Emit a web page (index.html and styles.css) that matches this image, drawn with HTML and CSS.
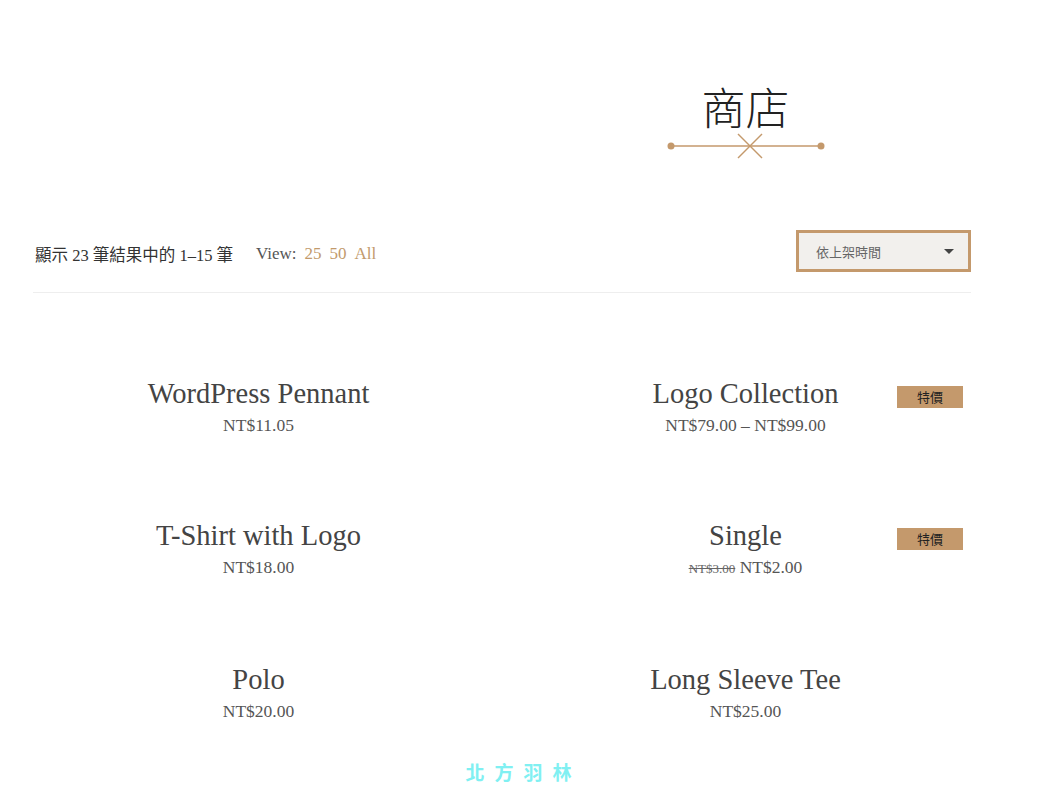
FILE: index.html
```html
<!DOCTYPE html>
<html lang="zh-Hant">
<head>
<meta charset="utf-8">
<title>商店</title>
<link rel="stylesheet" href="styles.css">
</head>
<body>
<div class="page">
  <header class="hero">
    <div class="hero-spacer"></div>
    <div class="hero-main">
      <h1 class="hero-title">商店</h1>
      <svg class="hero-deco" width="160" height="30" viewBox="0 0 160 30" aria-hidden="true">
        <line x1="4" y1="15" x2="154" y2="15" stroke="#c4996c" stroke-width="1.5"/>
        <circle cx="4" cy="15" r="3.5" fill="#c4996c"/>
        <circle cx="154" cy="15" r="3.5" fill="#c4996c"/>
        <line x1="71" y1="3" x2="95" y2="27" stroke="#c4996c" stroke-width="1.5"/>
        <line x1="95" y1="3" x2="71" y2="27" stroke="#c4996c" stroke-width="1.5"/>
      </svg>
    </div>
  </header>

  <div class="toolbar">
    <div class="toolbar-left">
      <span class="result-count">顯示 23 筆結果中的 1–15 筆</span>
      <span class="view">View:<a class="view-link">25</a><a class="view-link">50</a><a class="view-link">All</a></span>
    </div>
    <div class="orderby">
      <span>依上架時間</span>
      <span class="caret"></span>
    </div>
  </div>

  <ul class="products">
    <li class="product">
      <h2 class="product-name">WordPress Pennant</h2>
      <div class="price">NT$11.05</div>
    </li>
    <li class="product">
      <span class="badge">特價</span>
      <h2 class="product-name">Logo Collection</h2>
      <div class="price">NT$79.00 – NT$99.00</div>
    </li>
    <li class="product">
      <h2 class="product-name">T-Shirt with Logo</h2>
      <div class="price">NT$18.00</div>
    </li>
    <li class="product">
      <span class="badge">特價</span>
      <h2 class="product-name">Single</h2>
      <div class="price"><del class="old">NT$3.00</del> NT$2.00</div>
    </li>
    <li class="product">
      <h2 class="product-name">Polo</h2>
      <div class="price">NT$20.00</div>
    </li>
    <li class="product">
      <h2 class="product-name">Long Sleeve Tee</h2>
      <div class="price">NT$25.00</div>
    </li>
  </ul>
</div>
<footer class="footer">北方羽林</footer>
</body>
</html>
```
FILE: styles.css
```css
* { box-sizing: border-box; }
html, body { margin: 0; padding: 0; background: #fff; }
body {
  font-family: "Liberation Serif", "Noto Sans CJK TC", serif;
  color: #444;
}
.page {
  width: 938px;
  margin-left: 33px;
}
.hero {
  display: grid;
  grid-template-columns: 1fr 1fr;
  column-gap: 36px;
  padding-top: 77px;
}
.hero-main {
  display: flex;
  flex-direction: column;
  align-items: center;
}
.hero-title {
  margin: 0;
  font-family: "Noto Sans CJK TC", sans-serif;
  font-weight: 300;
  font-size: 44px;
  line-height: 58px;
  color: #222;
}
.hero-deco {
  display: block;
  margin-top: -4px;
  margin-left: 2px;
}
.toolbar {
  margin-top: 69px;
  display: flex;
  justify-content: space-between;
  align-items: center;
  padding-bottom: 20px;
  border-bottom: 1px solid #eee;
}
.toolbar-left {
  display: flex;
  align-items: center;
  gap: 23px;
  padding-left: 2px;
  margin-top: 6px;
  font-size: 16.5px;
  color: #333;
}
.view { color: #555; font-size: 17px; }
.view-link { color: #c29a6c; margin-left: 8px; text-decoration: none; }
.orderby {
  width: 175px;
  height: 42px;
  border: 3px solid #c4996c;
  background: #f2f0ed;
  display: flex;
  align-items: center;
  justify-content: space-between;
  padding: 0 14px 0 17px;
  font-family: "Noto Sans CJK TC", sans-serif;
  font-size: 13px;
  color: #666;
}
.caret {
  width: 0; height: 0;
  border-left: 5px solid transparent;
  border-right: 5px solid transparent;
  border-top: 5px solid #444;
}
.products {
  list-style: none;
  margin: 0;
  padding: 85px 0 0;
  display: grid;
  grid-template-columns: 1fr 1fr;
  column-gap: 36px;
  row-gap: 80px;
}
.product {
  position: relative;
  text-align: center;
}
.product-name {
  margin: 0;
  font-weight: 400;
  font-size: 28.5px;
  line-height: 32px;
  color: #444;
}
.price {
  font-size: 17.5px;
  line-height: 30px;
  color: #555;
}
.old { font-size: 13px; color: #666; }
.badge {
  position: absolute;
  right: 8px;
  top: 8px;
  width: 66px;
  height: 22px;
  background: #c4996c;
  color: #222;
  font-family: "Noto Sans CJK TC", sans-serif;
  font-size: 13px;
  line-height: 22px;
  text-align: center;
}
.footer {
  margin-top: 32px;
  text-align: center;
  font-family: "Noto Sans CJK TC", sans-serif;
  font-weight: 700;
  font-size: 19px;
  line-height: 28px;
  letter-spacing: 10px;
  color: #80f0f2;
  padding-left: 10px;
}
```
